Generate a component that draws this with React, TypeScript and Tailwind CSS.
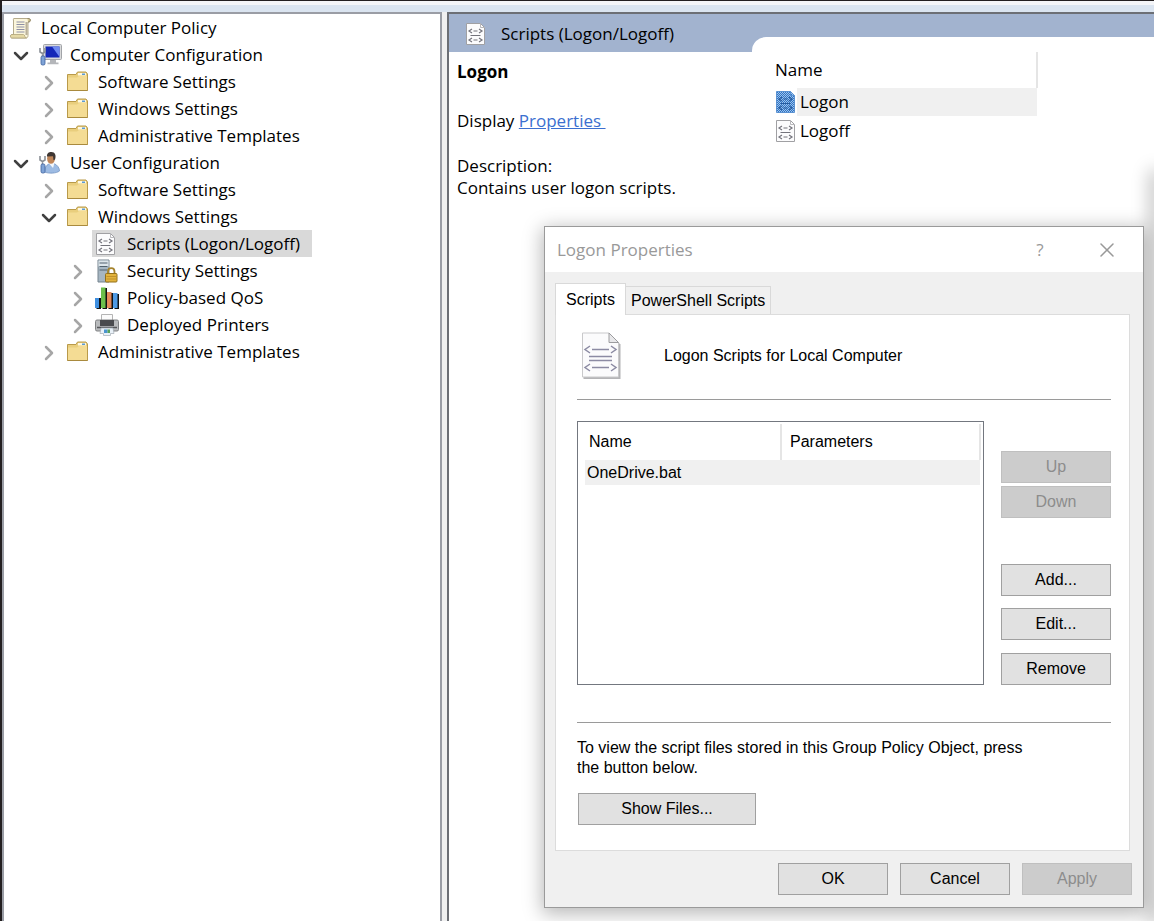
import { useState, type ReactNode } from 'react';
import { clsx } from 'clsx';
import { ChevronDown, ChevronRight, X } from 'lucide-react';

function PolicyIcon() {
  return (
    <svg viewBox="0 0 24 24" className="size-6 shrink-0" aria-hidden="true">
      <path d="M5 2.5h15c2 0 2 3.5 0 3.5h-1v13.500c0 2-1 2.500-2.500 2.500H3c-2 0-2-3.500 0-3.500h1.500V5C4.500 3.500 4 2.500 5 2.500z" fill="#fbf6dc" stroke="#b5ab8c" />
      <path d="M16.500 6v13h2V6z" fill="#b9b09a" />
      <path d="M3 18.500h11.500c1.500 0 1 3.500 3 3.500H3c-2 0-2-3.500 0-3.500z" fill="#e5d9a6" stroke="#b0a378" strokeWidth=".8" />
      <path d="M18.500 2.500c3.500-.5 3.500 3.500.5 3.500" fill="#d8c994" stroke="#8e8568" />
      <path d="M7.500 6h8M7.500 8.500h8M7.500 11h8M7.500 13.500h8M7.500 16h8" stroke="#8d8fa6" />
    </svg>
  );
}

function Tools() {
  return (
    <>
      <path d="M2 5v4l2.500 1.500L7 9V5M4.500 10.500v4" fill="none" stroke="#8a8f96" strokeWidth="1.600" />
      <rect x="3" y="13" width="4" height="9" rx="1.500" fill="#7fa3d6" stroke="#3e619c" strokeWidth=".8" />
    </>
  );
}

function ComputerIcon() {
  return (
    <svg viewBox="0 0 24 24" className="size-6 shrink-0" aria-hidden="true">
      <rect x="5.500" y="1.500" width="18" height="15" rx="1" fill="#d9dadb" stroke="#a2a4a8" />
      <rect x="7.500" y="3.500" width="14" height="11" fill="#1527b8" />
      <path d="M14 3.500h7.500V14z" fill="#6f8af0" />
      <path d="M12 17h6v2.500h2.500v1.800H9.500v-1.800H12z" fill="#b4b6ba" />
      <Tools />
    </svg>
  );
}

function UserIcon() {
  return (
    <svg viewBox="0 0 24 24" className="size-6 shrink-0" aria-hidden="true">
      <path d="M6.500 21c0-5 2.500-7.500 5.500-8.500h4c3.500 1.500 5.500 4.500 5.500 7.500-3 2.500-11 2.800-15 1z" fill="#9dbbe3" stroke="#6c8dbd" strokeWidth=".7" />
      <path d="M10.500 12l4.500 5 1.500-5z" fill="#f4f7fb" />
      <ellipse cx="13" cy="7.500" rx="3.900" ry="5.300" fill="#bf8558" />
      <path d="M9 5.500C8.500 2 11.500.8 13.500 1c3.500 0 5 3.500 3.500 7.500l-1.500.8-.5-4z" fill="#3f3733" />
      <Tools />
    </svg>
  );
}

function FolderIcon() {
  return (
    <svg viewBox="0 0 24 24" className="size-6 shrink-0" aria-hidden="true">
      <path d="M1.500 4.500h8.500l1.500-2.500h8.500l1.500 2v16.500h-20z" fill="#e9ce7d" stroke="#b99a4a" />
      <path d="M12 3h8v2.500h-8z" fill="#fff8df" />
      <path d="M16 3.500h3v1.500h-3z" fill="#5b9bd5" />
      <path d="M2 7.500h9l2-1.500h8v14H2z" fill="#f4dc94" />
      <path d="M1.500 20.500h20" stroke="#a98a3e" />
    </svg>
  );
}

function ScriptIcon({ active = false }: { active?: boolean }) {
  return (
    <svg viewBox="0 0 22 24" className="h-6 w-[22px] shrink-0" aria-hidden="true">
      {active && (
        <defs>
          <pattern id="dither" width="2" height="2" patternUnits="userSpaceOnUse">
            <rect width="2" height="2" fill="#9cc2ec" />
            <path d="M0 0h1v1H0zM1 1h1v1H1z" fill="#2f74c4" />
          </pattern>
        </defs>
      )}
      <path
        d="M1.500 1.500h14l4 4v17h-18z"
        fill={active ? 'url(#dither)' : '#fcfcfd'}
        stroke={active ? '#5b92d2' : '#a0a0a3'}
      />
      <path d="M15.500 1.500v4h4" fill="none" stroke={active ? '#5b92d2' : '#b9b9bc'} />
      <path
        d="M7 7L4 9l3 2M8.500 9h4M14 7l3 2-3 2M5.500 13.500h10M7 16l-3 2 3 2M8.500 18h4M14 16l3 2-3 2"
        fill="none"
        stroke={active ? '#275c9f' : '#74747c'}
        strokeWidth="1.200"
      />
    </svg>
  );
}

function SecurityIcon() {
  return (
    <svg viewBox="0 0 24 24" className="size-6 shrink-0" aria-hidden="true">
      <path d="M3 1h11v22H3z" fill="#a6b6c2" stroke="#74838e" />
      <path d="M3.500 1.500h10v6h-10z" fill="#dce5ea" />
      <path d="M4.500 4h8M4.500 7.500h8M4.500 11h8" stroke="#50616e" strokeWidth="1.200" />
      <path d="M13 15v-2.500c0-4.500 6.500-4.500 6.500 0V15" fill="none" stroke="#a5832c" strokeWidth="1.800" />
      <rect x="10.500" y="14.500" width="11.500" height="8.500" rx="1" fill="#e2b33c" stroke="#93701b" />
      <path d="M11.500 17.500h9.500M11.500 20h9.500" stroke="#c1912a" />
    </svg>
  );
}

function QosIcon() {
  return (
    <svg viewBox="0 0 24 24" className="size-6 shrink-0" aria-hidden="true">
      <path d="M3 12h3v11H1.500v-1H3zM9 2h3v21H7.500v-1H9zM15 7h3v16h-4.500v-1H15zM21 8h3v15h-4.500v-1H21z" fill="#111" />
      <path d="M0 12h4v10H0z" fill="#3f8fe0" />
      <path d="M6 1.500h4.500v20.500H6z" fill="#6cbf4b" />
      <path d="M12 6h4.500v16H12z" fill="#e58a5b" />
      <path d="M18 7h4.500v15H18z" fill="#4f9ae3" />
    </svg>
  );
}

function PrinterIcon() {
  return (
    <svg viewBox="0 0 24 24" className="size-6 shrink-0" aria-hidden="true">
      <path d="M6.500 1.500h11V9h-11z" fill="#fbfbfb" stroke="#b4b4b4" />
      <rect x=".5" y="7" width="23" height="11" rx="1.500" fill="#b9bbbd" stroke="#808284" />
      <path d="M5 7h14v6H5z" fill="#4a4b4e" />
      <path d="M2 14.500h20" stroke="#55575a" strokeWidth="1.500" />
      <path d="M6 15h12l1 5.500h-3.500v2h-7v-2H5z" fill="#e9f1f8" stroke="#a3acb5" strokeWidth=".7" />
      <path d="M9 16.500h3.500V20H9z" fill="#4b93cf" />
      <path d="M12.500 16.500H15V20h-2.500z" fill="#58a45b" />
    </svg>
  );
}

function LargeScriptIcon() {
  return (
    <svg viewBox="0 0 40 48" className="h-12 w-10 shrink-0" aria-hidden="true">
      <path d="M2.500 2.500h27l10 10v34.500h-37z" fill="#b4b4b6" />
      <path d="M1.500 1h26.500l9.500 9.500v34.500h-36z" fill="#fbfbfc" stroke="#c9c9cb" />
      <path d="M28 1v9.500h9.500z" fill="#e8e8ea" stroke="#9c9c9f" />
      <path
        d="M9 14l-5 3.500L9 21M30 14l5 3.500-5 3.500M9 32l-5 3.500L9 39M30 32l5 3.500-5 3.500"
        fill="none"
        stroke="#8c8ba3"
        strokeWidth="1.500"
      />
      <path d="M11 17.500h17M8 24.500h23M8 28.500h23M11 35.500h17" stroke="#8c8ba3" strokeWidth="1.500" />
    </svg>
  );
}

interface TreeNode {
  label: string;
  level: 0 | 1 | 2 | 3;
  icon: ReactNode;
  state?: 'open' | 'closed';
  selected?: boolean;
}

const tree: TreeNode[] = [
  { label: 'Local Computer Policy', level: 0, icon: <PolicyIcon /> },
  { label: 'Computer Configuration', level: 1, icon: <ComputerIcon />, state: 'open' },
  { label: 'Software Settings', level: 2, icon: <FolderIcon />, state: 'closed' },
  { label: 'Windows Settings', level: 2, icon: <FolderIcon />, state: 'closed' },
  { label: 'Administrative Templates', level: 2, icon: <FolderIcon />, state: 'closed' },
  { label: 'User Configuration', level: 1, icon: <UserIcon />, state: 'open' },
  { label: 'Software Settings', level: 2, icon: <FolderIcon />, state: 'closed' },
  { label: 'Windows Settings', level: 2, icon: <FolderIcon />, state: 'open' },
  { label: 'Scripts (Logon/Logoff)', level: 3, icon: <ScriptIcon />, selected: true },
  { label: 'Security Settings', level: 3, icon: <SecurityIcon />, state: 'closed' },
  { label: 'Policy-based QoS', level: 3, icon: <QosIcon />, state: 'closed' },
  { label: 'Deployed Printers', level: 3, icon: <PrinterIcon />, state: 'closed' },
  { label: 'Administrative Templates', level: 2, icon: <FolderIcon />, state: 'closed' },
];

const indents = ['pl-[2px]', 'pl-[3px]', 'pl-[31px]', 'pl-[60px]'];

function TreeRow({ node }: { node: TreeNode }) {
  return (
    <li className={clsx('flex h-[27px] items-center', indents[node.level])}>
      {node.level > 0 && (
        <span className="flex w-7 shrink-0 justify-center pt-0.5">
          {node.state === 'open' && <ChevronDown className="size-6 text-[#404040]" strokeWidth={2.5} />}
          {node.state === 'closed' && <ChevronRight className="size-6 text-[#a6a6a6]" strokeWidth={2.5} />}
        </span>
      )}
      <span
        className={clsx(
          'flex h-[27px] items-center pr-3 pl-[3px] whitespace-nowrap',
          node.selected && 'bg-[#d9d9d9]',
        )}
      >
        <span className="flex w-8 shrink-0">{node.icon}</span>
        {node.label}
      </span>
    </li>
  );
}

interface PushButtonProps {
  children: ReactNode;
  className?: string;
  disabled?: boolean;
  onClick?: () => void;
}

function PushButton({ children, className = 'w-[110px]', disabled, onClick }: PushButtonProps) {
  return (
    <button
      type="button"
      disabled={disabled}
      onClick={onClick}
      className={clsx(
        'h-8 border text-base leading-5 disabled:border-[#bfbfbf] disabled:bg-[#cccccc] disabled:text-[#8c8c8c]',
        'border-[#a0a0a0] bg-[#e1e1e1] text-black',
        className,
      )}
    >
      {children}
    </button>
  );
}

function LogonDialog({ onClose }: { onClose: () => void }) {
  return (
    <section
      role="dialog"
      aria-label="Logon Properties"
      className="absolute top-[212px] right-[10px] w-[600px] border border-[#9a9a9a] bg-[#f0f0f0] shadow-[0_4px_18px_2px_rgba(0,0,0,0.28)]"
    >
      <header className="flex h-[45px] items-center bg-white pr-6 pl-3 text-[#999999]">
        <h2 className="flex-1">Logon Properties</h2>
        <button type="button" aria-label="Help" className="mr-[47px] w-4">
          ?
        </button>
        <button type="button" aria-label="Close" onClick={onClose}>
          <X className="size-6" strokeWidth={1.5} />
        </button>
      </header>

      <div className="pt-[11px] pr-[11px] pb-3 pl-[10px] font-['Liberation_Sans',sans-serif] text-base leading-5">
        <div role="tablist" className="flex items-end">
          <button
            type="button"
            role="tab"
            aria-selected="true"
            className="z-10 -mb-px h-8 w-[71px] border border-b-0 border-[#d9d9d9] bg-white"
          >
            Scripts
          </button>
          <button
            type="button"
            role="tab"
            aria-selected="false"
            className="h-7 border border-b-0 border-l-0 border-[#d9d9d9] bg-[#f0f0f0] px-[5px] whitespace-nowrap"
          >
            PowerShell Scripts
          </button>
        </div>

        <div role="tabpanel" className="mr-0.5 border border-[#dcdcdc] bg-white pt-[17px] pr-[18px] pb-[25px] pl-[21px]">
          <div className="flex h-12 items-center gap-[43px] pl-1">
            <LargeScriptIcon />
            <p>Logon Scripts for Local Computer</p>
          </div>
          <hr className="mt-[19px] border-t border-[#9a9a9a]" />

          <div className="mt-[21px] flex items-end gap-[17px]">
            <div className="h-[264px] flex-1 border border-[#73777f] bg-white py-0.5 pr-0.5 pl-[7px]">
              <table className="w-full table-fixed text-left">
                <thead>
                  <tr className="h-9">
                    <th className="w-[196px] border-r-2 border-[#e5e5e5] pl-1 font-normal">Name</th>
                    <th className="border-r-2 border-[#e5e5e5] pl-2 font-normal">Parameters</th>
                  </tr>
                </thead>
                <tbody>
                  <tr className="h-[25px] bg-[#f0f0f0]">
                    <td className="pl-0.5">OneDrive.bat</td>
                    <td />
                  </tr>
                </tbody>
              </table>
            </div>
            <div className="flex flex-col">
              <PushButton disabled>Up</PushButton>
              <PushButton disabled className="mt-[3px] w-[110px]">Down</PushButton>
              <PushButton className="mt-[46px] w-[110px]">Add...</PushButton>
              <PushButton className="mt-3 w-[110px]">Edit...</PushButton>
              <PushButton className="mt-[13px] w-[110px]">Remove</PushButton>
            </div>
          </div>

          <hr className="mt-[37px] border-t border-[#9a9a9a]" />
          <p className="mt-[15px] max-w-[460px]">
            To view the script files stored in this Group Policy Object, press the button below.
          </p>
          <PushButton className="mt-[15px] ml-px w-[178px]">Show Files...</PushButton>
        </div>

        <div className="mt-3 flex justify-end gap-3">
          <PushButton onClick={onClose}>OK</PushButton>
          <PushButton onClick={onClose}>Cancel</PushButton>
          <PushButton disabled>Apply</PushButton>
        </div>
      </div>
    </section>
  );
}

export default function App() {
  const [open, setOpen] = useState(true);

  return (
    <div className="flex h-screen min-h-[720px] flex-col overflow-hidden border-t border-l-2 border-[#231f20] bg-[#dae4f0] font-['Open_Sans',sans-serif] text-[17px] leading-[22px] text-black">
      <div className="h-[11px] shrink-0 border-t-4 border-[#f4f5f8]" />
      <div className="flex flex-1">
        <nav aria-label="Policy tree" className="w-[440px] shrink-0 border-2 border-b-0 border-[#9a9da5] bg-white">
          <ul>
            {tree.map((node, i) => (
              <TreeRow key={i} node={node} />
            ))}
          </ul>
        </nav>
        <div className="w-[5px] shrink-0 bg-[#f0f0f0]" />

        <main className="relative flex min-w-0 flex-1 flex-col border-t-2 border-l-2 border-[#6c6f75] bg-white">
          <header className="flex h-[38px] shrink-0 items-center bg-[#a2b3cf] pt-px pl-4">
            <span className="flex w-9">
              <ScriptIcon />
            </span>
            <h1>Scripts (Logon/Logoff)</h1>
          </header>
          <div className="flex flex-1">
            <div className="w-[303px] shrink-0 pt-[9px] pl-2">
              <h2 className="font-bold">Logon</h2>
              <p className="mt-[27px] whitespace-pre">
                Display{' '}
                <a href="#properties" onClick={() => setOpen(true)} className="text-[#3b6fd0] underline">
                  {'Properties '}
                </a>
              </p>
              <p className="mt-[23px]">Description:</p>
              <p>Contains user logon scripts.</p>
            </div>
            <div className="-mt-[15px] flex-1 rounded-tl-[14px] bg-white pt-[15px] pl-[23px]">
              <table className="w-[263px] text-left">
                <thead>
                  <tr className="h-9">
                    <th colSpan={2} className="border-r-2 border-[#e5e5e5] font-normal">
                      Name
                    </th>
                  </tr>
                </thead>
                <tbody>
                  <tr className="h-7">
                    <td className="w-[22px]"><ScriptIcon active /></td>
                    <td className="bg-[#f0f0f0] pl-[3px]">Logon</td>
                  </tr>
                  <tr className="h-[30px]">
                    <td><ScriptIcon /></td>
                    <td className="pl-[3px]">Logoff</td>
                  </tr>
                </tbody>
              </table>
            </div>
          </div>
          <div className="absolute top-[160px] -right-1 bottom-0 w-1 shadow-[0_0_18px_4px_rgba(0,0,0,0.28)]" />
          {open && <LogonDialog onClose={() => setOpen(false)} />}
        </main>
      </div>
    </div>
  );
}
